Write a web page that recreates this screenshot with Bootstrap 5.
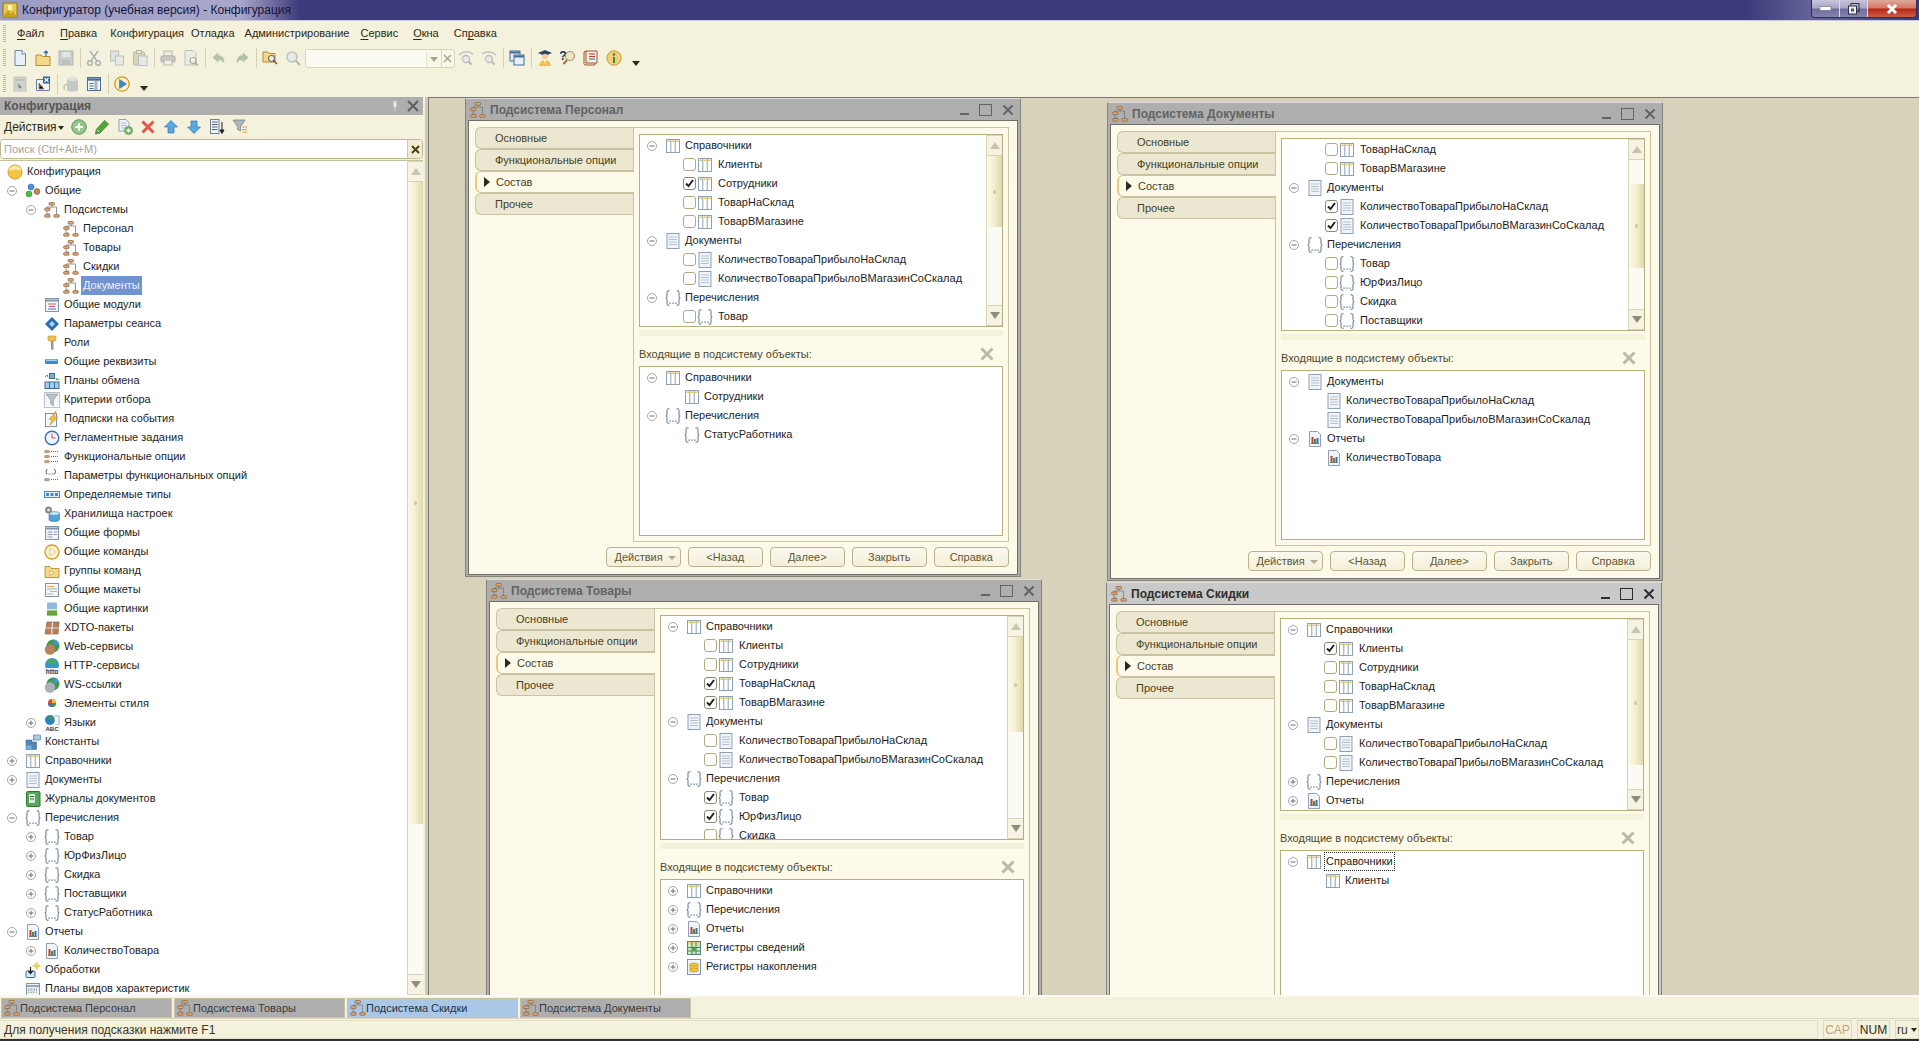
<!DOCTYPE html>
<html lang="ru">
<head>
  <meta charset="UTF-8">
  <title>Конфигуратор (учебная версия) - Конфигурация</title>
  <link href="https://cdn.jsdelivr.net/npm/bootstrap@5.3.2/dist/css/bootstrap.min.css" rel="stylesheet">
  <style>
    html, body { height: 100%; margin: 0; overflow: hidden; }
    body { font-family: "Liberation Sans", Arial, sans-serif; font-size: 11px; line-height: 1; color: #2a2a20; background: #f4f1dd; }
    .ic { width: 16px; height: 16px; flex: none; display: block; }

    .app { width: 1919px; height: 1041px; }

    /* title bar */
    .titlebar { height: 21px; flex: none; font-size: 12px; background: linear-gradient(90deg, #3c3a7a 0, #3c3a7a 91%, #66649a 94.5%, #3c3a7a 100%); border-bottom: 1px solid #c9c8dc; }
    .title-glow { height: 20px; width: 300px; padding-left: 2px; background: linear-gradient(90deg, #9c9bc2 0, #a9a8ca 80%, #3c3a7a 100%); color: #14143a; }
    .title-glow span { margin-left: 4px; }
    .winbtns { margin-right: 2px; height: 18px; border: 1px solid #2d2c52; border-top: 0; border-radius: 0 0 4px 4px; overflow: hidden; }
    .winbtn { height: 17px; display: flex; align-items: center; justify-content: center; }
    .winbtn-min, .winbtn-max { width: 28px; background: linear-gradient(180deg, #c6c5da 0, #a9a8c6 45%, #6e6d9d 55%, #8584ad 100%); border-right: 1px solid #dcdbe8; }
    .winbtn-close { width: 48px; background: linear-gradient(180deg, #dfa79a 0, #d27b68 45%, #b72a17 55%, #cc5d4a 100%); }

    /* menu and toolbars */
    .menubar { height: 25px; flex: none; padding-left: 3px; }
    .grip { width: 3px; background: repeating-linear-gradient(180deg, #bdb99c 0 1px, transparent 1px 2px); flex: none; }
    .menubar .grip { height: 17px; margin-right: 11px; }
    .menu-link { color: #2d2a12; padding: 0; }
    .menu-link u { text-underline-offset: 2px; }
    .menu-link:nth-child(2) { margin-right: 16px; }
    .menu-link:nth-child(3) { margin-right: 13px; }
    .menu-link:nth-child(4) { margin-right: 7px; }
    .menu-link:nth-child(5) { margin-right: 10px; }
    .menu-link:nth-child(6) { margin-right: 11px; }
    .menu-link:nth-child(7) { margin-right: 15px; }
    .menu-link:nth-child(8) { margin-right: 15px; }

    .toolrow { height: 24px; flex: none; padding-left: 3px; }
    .toolrow + .toolrow { height: 27px; }
    .toolrow .grip { height: 18px; margin-right: 2.5px; }
    .tb-slot { width: 23px; height: 22px; display: flex; align-items: center; justify-content: center; flex: none; }
    .tb-sep { width: 1px; height: 20px; background: #d5d1b8; margin: 0 2px; flex: none; }
    .tb-more { width: 0; height: 0; border: 4px solid transparent; border-top: 5px solid #2d2a12; border-bottom: 0; margin: 10px 0 0 6px; }
    .off { opacity: .55; }
    .tb-find { width: 150px; height: 19px; flex: none; border: 1px solid #d9d5b8; border-radius: 3px; background: #f9f7e8; }
    .tb-find .form-control { height: 17px; width: 121px; padding: 0; border: 0; border-right: 1px solid #e6e3cc; border-radius: 3px 0 0 3px; background: #fcfbf3; flex: none; }
    .tb-drop { width: 15px; border-right: 1px solid #d9d5b8; }
    .tb-drop i { width: 0; height: 0; border: 4px solid transparent; border-top: 5px solid #a9a58c; border-bottom: 0; margin-top: 2px; }

    /* left panel */
    .config-panel { width: 428px; flex: none; border-right: 3px solid #cfcbb4; padding-right: 2px; }
    .panel-head { height: 18px; flex: none; background: #aeaeae; color: #565656; font-size: 12px; font-weight: 700; padding: 0 4px; }
    .panel-acts { height: 24px; flex: none; padding-left: 4px; }
    .panel-acts .act-name { color: #2d2a12; width: 50px; font-size: 12px; }
    .act-arrow { width: 0; height: 0; border: 3px solid transparent; border-top: 4px solid #2d2a12; border-bottom: 0; margin: 2px 7px 0 4px; }
    .panel-acts .ic { margin-right: 7px; }
    .search-box { height: 20px; flex: none; border: 1px solid #bdb78d; border-radius: 4px; overflow: hidden; background: #fff; margin-bottom: 1px; }
    .search-box .form-control { border: 0; border-radius: 0; padding: 0 3px; height: 18px; font-size: 11px; line-height: 18px; background: #fff; }
    .search-box .form-control::placeholder { color: #a5a5a5; }
    .search-x { width: 15px; flex: none; background: #f1edd5; border-left: 1px solid #cfc9a4; }
    .main-tree { border-top: 1px solid #c7c29f; background: #fff; }

    /* trees */
    .tree-rows { padding-top: 1px; min-width: 0; overflow: hidden; background: #fff; }
    .tree-row { height: 19px; white-space: nowrap; color: #1d1d1d; }
    .tree-toggle { width: 10px; height: 10px; flex: none; margin-right: 8px; }
    .tree-spacer { width: 10px; flex: none; margin-right: 8px; }
    .tree-row .ic { margin-right: 4px; }
    .tree-label { padding: 0 2px; margin-left: -2px; height: 19px; line-height: 19px; }
    .tree-label-sel { background: #6f94cf; color: #edf2fb; }
    .tree-label-focus { outline: 1px dotted #222; outline-offset: -1px; }
    .tree-check.form-check-input { width: 13px; height: 13px; flex: none; margin: 0 1px 0 -1px; border: 1px solid #b1aa80; border-radius: 3px; background-color: #fff; }
    .tree-check + .ic { margin-right: 5px; }
    .tree-check.form-check-input:checked { background-color: #fff; border-color: #8a8a70; background-image: url("data:image/svg+xml,%3csvg xmlns='http://www.w3.org/2000/svg' viewBox='0 0 13 13'%3e%3cpath fill='none' stroke='%23222' stroke-width='2' d='M3 6.500l2.500 2.500 4.500-6'/%3e%3c/svg%3e"); background-size: 13px 13px; }

    /* scrollbars */
    .vscroll { width: 16px; flex: none; border-left: 1px solid #d8d4b8; background: #fbfaf3; }
    .vscroll-btn { height: 21px; flex: none; background: #f6f3e2; border-bottom: 1px solid #d8d4b8; border-top: 1px solid #d8d4b8; }
    .vscroll-up { width: 0; height: 0; border: 5px solid transparent; border-bottom: 7px solid #c8c4b0; border-top: 0; }
    .vscroll-down { width: 0; height: 0; border: 5px solid transparent; border-top: 7px solid #8f8d7d; border-bottom: 0; }
    .vscroll-thumb { background: linear-gradient(90deg, #fbf9e8 0, #f3efcf 50%, #dfd9a9 100%); flex: none; }
    .vscroll-thumb i { width: 3px; height: 4px; background: #cfc9a4; border-radius: 2px; }

    /* workspace */
    .mdi-area { position: relative; overflow: hidden; background: #d8d2bb; border-top: 1px solid #77776b; border-left: 1px solid #77776b; }
    .wnd { position: absolute; width: 556px; background: #aeaeae; border: 1px solid #84847c; border-top-color: #dcdcdc; padding: 0 2px 2px; }
    .wnd-persona { left: 36px; top: 0; }
    .wnd-docs { left: 678px; top: 4px; }
    .wnd-goods { left: 57px; top: 481px; }
    .wnd-sale { left: 677px; top: 484px; background: #c9c9c9; }
    .wnd-head { height: 21px; padding: 1px 0 0 2px; color: #636363; font-weight: 700; font-size: 12px; }
    .wnd-sale .wnd-head { color: #2e2e2e; }
    .wnd-head .ic { margin-right: 4px; }
    .wnd-ctl { margin-left: 10px; }
    .wnd-body { border: 1px solid #6f6f6a; background: #fdfaea; padding: 6px 8px 7px 6px; }
    .tab-col { width: 158px; flex: none; }
    .tab-link { height: 22px; line-height: 20px; padding: 0 0 0 19px; color: #453f1e; background: #ece7d0; border: 1px solid #c9c3a2; border-right: 0; border-radius: 6px 0 0 6px; position: relative; }
    .tab-link:hover { color: #453f1e; }
    .tab-link.active { background: #fdfaea; border-left: 2px solid #eec77f; margin-right: -1px; z-index: 1; }
    .tab-link.active::before { content: ""; position: absolute; left: 7px; top: 5px; border: 5px solid transparent; border-left: 6px solid #2a2a20; border-right: 0; }
    .wnd-panel { border: 1px solid #c9c3a2; padding: 6px 5px 5px; min-width: 0; }
    .wnd-tree { border: 1px solid #b5ae85; background: #fff; overflow: hidden; min-height: 0; }
    .split-bar { height: 6px; margin-top: 3px; flex: none; background: #f5f2dc; }
    .inc-head { height: 22px; margin: 7px 0 1px; color: #4c4727; padding-right: 8px; flex: none; }
    .wnd-foot { height: 20px; margin-top: 5px; gap: 6.5px; flex: none; }
    .wnd-btn.btn { width: 75.5px; height: 20px; padding: 0; font-size: 11px; line-height: 18px; color: #5e5836; background: linear-gradient(180deg, #fbf9ee 0, #f4f0da 100%); border: 1px solid #b9b38b; border-radius: 4px; }
    .wnd-btn i { width: 0; height: 0; border: 4px solid transparent; border-top: 4px solid #b2ac8c; border-bottom: 0; margin: 2px 4px 0 0; }

    /* bottom bars */
    .taskbar { height: 23px; flex: none; border-top: 2px solid #fbfaf2; padding: 1px 0 0 1px; gap: 2px; }
    .task-item { width: 171px; height: 20px; background: #aeaeae; border: 1px solid #c9c3a2; color: #3a3a3a; padding-left: 2px; }
    .task-item.is-on { background: #aac8e6; color: #22324a; }
    .statusbar { height: 23px; flex: none; font-size: 12px; border-top: 1px solid #dcd8c0; border-bottom: 2px solid #2e2d3e; padding-top: 1px; color: #3a3720; }
    .status-main { width: 1818px; height: 19px; padding-left: 4px; border: 1px solid #e3dfc8; border-left: 0; }
    .status-cell { height: 19px; border: 1px solid #dcd8c0; margin-left: 5px; }
    .status-cap { width: 29px; color: #b8a872; }
    .status-num { width: 33px; color: #2d2a12; }
    .status-lang { width: 24px; margin-right: -1px; }
  </style>
</head>
<body>
  <svg width="0" height="0" class="position-absolute">
    <defs>
      <symbol id="i-sub" viewBox="0 0 16 16"><path d="M8 3v2H3v1M8 5h4.500v7M3 9v3h3" fill="none" stroke="#7a7a7a" stroke-width=".8"/><g fill="#dfa877" stroke="#8a5b2e" stroke-width=".7"><rect x="5" y=".5" width="5.500" height="2.600" rx="1"/><rect x=".6" y="6" width="5.500" height="2.600" rx="1"/><rect x=".6" y="12.600" width="5.500" height="2.600" rx="1"/><rect x="9.800" y="12.600" width="5.500" height="2.600" rx="1"/></g></symbol>
      <symbol id="i-cat" viewBox="0 0 16 16"><rect x="1.500" y="1.500" width="13" height="13" fill="#fff" stroke="#8ba1b6"/><path d="M2.500 2.500h2.500v1.500H2.500zM6.700 2.500h2.600v1.500H6.700zM11 2.500h2.500v1.500H11z" fill="#f4c63c"/><path d="M5.800 2v12M10.200 2v12" stroke="#8ba1b6"/></symbol>
      <symbol id="i-doc" viewBox="0 0 16 16"><rect x="2" y=".5" width="12" height="15" fill="#f0f4f8" stroke="#8ca1b6"/><path d="M4 4h8M4 6.500h8M4 9h8M4 11.500h8" stroke="#b4c3d1"/></symbol>
      <symbol id="i-enum" viewBox="0 0 16 16"><path d="M4.500 .8H3Q2 .8 2 2.300V6.500Q2 8 .8 8 2 8 2 9.500V13.700Q2 15.200 3 15.200H4.500M11.500 .8H13Q14 .8 14 2.300V6.500Q14 8 15.200 8 14 8 14 9.500V13.700Q14 15.200 13 15.200H11.500" fill="none" stroke="#4a6480" stroke-width=".9"/><path d="M4.500 12.500h1.200v1.200H4.500zM7.400 12.500h1.200v1.200H7.400zM10.300 12.500h1.200v1.200H10.300z" fill="#4a6480"/></symbol>
      <symbol id="i-rep" viewBox="0 0 16 16"><path d="M2.500.5h8l3 3v12h-11z" fill="#f0f4f8" stroke="#8ca1b6"/><rect x="4.500" y="6" width="2" height="6" fill="#d23a2a"/><rect x="7" y="8" width="2" height="4" fill="#3a9a3a"/><rect x="9.500" y="7" width="2" height="5" fill="#3a6ac8"/><path d="M4 12.500h8" stroke="#777"/></symbol>
      <symbol id="i-common" viewBox="0 0 16 16"><circle cx="6" cy="4" r="3" fill="#4a90d8" stroke="#2b5f9a" stroke-width=".5"/><circle cx="4" cy="11" r="3" fill="#52b948" stroke="#2d7a28" stroke-width=".5"/><circle cx="12" cy="8.500" r="3" fill="#b98862" stroke="#7b5534" stroke-width=".5"/></symbol>
      <symbol id="i-root" viewBox="0 0 16 16"><circle cx="8" cy="8" r="7" fill="#f5c445" stroke="#c89a2e"/><path d="M1.500 7Q8 4 14.500 7 14 2 8 1.500 2 2 1.500 7" fill="#fbe9a8"/></symbol>
      <symbol id="i-mod" viewBox="0 0 16 16"><rect x="1.500" y="1.500" width="13" height="13" fill="#f4f6f9" stroke="#7d95ad"/><path d="M2 3.500h12" stroke="#7d95ad" stroke-width="2"/><path d="M4 7h8M5 9.500h6" stroke="#d65a4a"/><path d="M4 12h8" stroke="#4a78c8"/></symbol>
      <symbol id="i-param" viewBox="0 0 16 16"><path d="M8 1l7 7-7 7-7-7z" fill="#2c6cb4"/><path d="M8 5l3 3-3 3-3-3z" fill="#a8d0f0"/></symbol>
      <symbol id="i-role" viewBox="0 0 16 16"><rect x="4" y="1" width="8" height="5" rx="1" fill="#eec14e" stroke="#b88e2a" stroke-width=".6"/><path d="M7 6h2.500v8L8 15.500 7 14z" fill="#9a9a90"/></symbol>
      <symbol id="i-attr" viewBox="0 0 16 16"><rect x="1" y="5" width="13" height="5" rx="1" fill="#3a8cd4"/><rect x="2" y="5.500" width="11" height="1.500" fill="#a4d0f2"/></symbol>
      <symbol id="i-exch" viewBox="0 0 16 16"><rect x="5.500" y=".5" width="5" height="5" fill="#7ab0dc" stroke="#3f6c94"/><rect x="1" y="9" width="14" height="6.500" fill="#a8cce8" stroke="#3f6c94"/><path d="M5.500 9v6.500M10.500 9v6.500" stroke="#3f6c94"/><path d="M1 4l2-2 1 2M15 6l-2 1-1-2" fill="none" stroke="#3a9a3a"/></symbol>
      <symbol id="i-filter" viewBox="0 0 16 16"><rect x=".5" y=".5" width="15" height="15" fill="#f6f8fa" stroke="#b8c4cf"/><path d="M2 2h12L9.500 8v6l-3-2V8z" fill="#b9c0c5" stroke="#7f8a92" stroke-width=".5"/></symbol>
      <symbol id="i-bolt" viewBox="0 0 16 16"><rect x="1.500" y="2.500" width="11" height="13" fill="#f6f8fa" stroke="#7d95ad"/><path d="M12 0L5 8.500h3L6 14l8-8h-4z" fill="#f2c23a" stroke="#c47a1c" stroke-width=".5"/></symbol>
      <symbol id="i-clock" viewBox="0 0 16 16"><circle cx="8" cy="8" r="6.800" fill="#eef4fb" stroke="#3c6fb4" stroke-width="1.400"/><path d="M8 3.500V8h3.500" fill="none" stroke="#d24b3a"/></symbol>
      <symbol id="i-fopt" viewBox="0 0 16 16"><g fill="#c9a583" stroke="#8a6a4a" stroke-width=".5"><rect x=".5" y="1.500" width="5" height="2.200" rx="1"/><rect x=".5" y="6.500" width="5" height="2.200" rx="1"/><rect x=".5" y="11.500" width="5" height="2.200" rx="1"/></g><path d="M7 2.500h8M7 7.500h8M7 12.500h8" stroke="#666" stroke-dasharray="1 1"/></symbol>
      <symbol id="i-fpar" viewBox="0 0 16 16"><path d="M3 1Q1 3.500 3 6.500M10.500 1Q12.500 3.500 10.500 6.500" fill="none" stroke="#555"/><path d="M4.500 5.500h1v1h-1zM6.500 5.500h1v1h-1zM8.500 5.500h1v1h-1z" fill="#555"/><rect x=".5" y="10.500" width="5" height="2.200" rx="1" fill="#c9a583" stroke="#8a6a4a" stroke-width=".5"/><path d="M7 11.500h8" stroke="#666" stroke-dasharray="1 1"/></symbol>
      <symbol id="i-types" viewBox="0 0 16 16"><rect x=".5" y="4.500" width="15" height="6" fill="#e4eef7" stroke="#4a88c0"/><path d="M2 6h3v3H2zM6.500 6h3v3h-3zM11 6h3v3h-3z" fill="#4a88c0"/></symbol>
      <symbol id="i-store" viewBox="0 0 16 16"><path d="M5 7.500h10.500v6Q15.500 15.500 10 15.500 5 15.500 5 13.500z" fill="#4fa3dc" stroke="#2a6c9a" stroke-width=".5"/><ellipse cx="10.200" cy="7.500" rx="5.300" ry="2" fill="#c6e3f6" stroke="#2a6c9a" stroke-width=".5"/><circle cx="4.500" cy="4" r="3.500" fill="#8b8b8b"/><circle cx="4.500" cy="4" r="1.300" fill="#eee"/></symbol>
      <symbol id="i-form" viewBox="0 0 16 16"><rect x="1.500" y="1.500" width="13" height="13" fill="#f4f6f9" stroke="#7d95ad"/><path d="M2 3.500h12" stroke="#7d95ad" stroke-width="2"/><path d="M3.500 7h5M3.500 9.500h5M3.500 12h5M10 7h3M10 9.500h3" stroke="#8a9aab"/></symbol>
      <symbol id="i-cmd" viewBox="0 0 16 16"><circle cx="8" cy="8" r="7" fill="#fdf3cf" stroke="#d2a12e" stroke-width="1.400"/><path d="M6 4.500L11.500 8 6 11.500z" fill="#fff" stroke="#c7a24a" stroke-width=".6"/></symbol>
      <symbol id="i-cmdgrp" viewBox="0 0 16 16"><path d="M1 3.500h5l1.500 2H15v9H1z" fill="#f4d984" stroke="#bf9a3c"/><path d="M6 7.500L10 10l-4 2.500z" fill="#fff" stroke="#bf9a3c" stroke-width=".6"/></symbol>
      <symbol id="i-layout" viewBox="0 0 16 16"><rect x="1.500" y="1.500" width="13" height="13" fill="#f4f6f9" stroke="#7d95ad"/><path d="M3 4.500h7" stroke="#e2a45a"/><path d="M3 7h10" stroke="#9ab4cc"/><path d="M6 9.500h7" stroke="#d8a88a"/><path d="M3 12h6" stroke="#9ab4cc"/></symbol>
      <symbol id="i-pic" viewBox="0 0 16 16"><rect x="3" y="1.500" width="10" height="13" rx="1" fill="#8fb8dc"/><rect x="3" y="9" width="10" height="5.500" fill="#62a33e"/><rect x="3" y="8" width="10" height="1.500" fill="#e9edc9"/></symbol>
      <symbol id="i-xdto" viewBox="0 0 16 16"><path d="M3 2h12l-1 12H1z" fill="#b87f55" stroke="#7e5232" stroke-width=".6"/><path d="M1.800 8h12.800M8.500 2l-.8 12" stroke="#d9e6f2" stroke-width="1.200"/></symbol>
      <symbol id="i-web" viewBox="0 0 16 16"><circle cx="9" cy="7" r="6.500" fill="#3f9a52"/><path d="M9 .5a6.500 6.500 0 0 1 6 4l-5 2z" fill="#4a90d8"/><circle cx="6" cy="10.500" r="5.200" fill="#b9825a"/></symbol>
      <symbol id="i-ws" viewBox="0 0 16 16"><circle cx="9" cy="7" r="6.500" fill="#3f9a52"/><path d="M9 .5a6.500 6.500 0 0 1 6 4l-5 2z" fill="#4a90d8"/><circle cx="6" cy="10.500" r="5.200" fill="#a9b0b8"/></symbol>
      <symbol id="i-http" viewBox="0 0 16 16"><circle cx="8" cy="7" r="7" fill="#3f8fd8"/><path d="M3 3q5-4 10 0l-2 4-6-1z" fill="#4aa85a"/><rect x="0" y="10" width="16" height="6" fill="#eef4fb"/><text x="8" y="15.500" font-size="6.500" font-weight="700" text-anchor="middle" fill="#23425f" font-family="Liberation Sans">http</text></symbol>
      <symbol id="i-style" viewBox="0 0 16 16"><circle cx="8" cy="7" r="4" fill="#d64a3a"/><path d="M8 3a4 4 0 0 1 4 4H8z" fill="#e8c23a"/><path d="M4 7a4 4 0 0 0 4 4V7z" fill="#4a6ac8"/><path d="M12 7a4 4 0 0 1-4 4V7z" fill="#3a9a4a"/></symbol>
      <symbol id="i-lang" viewBox="0 0 16 16"><circle cx="6" cy="5" r="5" fill="#2f7fc8"/><path d="M3 2q3-2 6 1l-3 3z" fill="#3f9a52"/><path d="M10.500 1H15v9h-4" fill="#fff" stroke="#9aa7b4"/><rect x="0" y="10" width="16" height="6" fill="#f4f6f9"/><text x="8" y="15.500" font-size="6" font-weight="700" text-anchor="middle" fill="#23425f" font-family="Liberation Sans">ABC</text></symbol>
      <symbol id="i-const" viewBox="0 0 16 16"><rect x="1" y="6" width="6" height="4.500" fill="#4a88c0" stroke="#2a5f90" stroke-width=".5"/><rect x="1" y="11" width="6" height="4.500" fill="#7ab0dc" stroke="#2a5f90" stroke-width=".5"/><rect x="7.500" y="8" width="4" height="7.500" fill="#4a88c0" stroke="#2a5f90" stroke-width=".5"/><rect x="8.500" y="1" width="7" height="5" fill="#a8cce8" stroke="#2a5f90" stroke-width=".5"/></symbol>
      <symbol id="i-journal" viewBox="0 0 16 16"><rect x="1.500" y=".5" width="13.500" height="15" rx="1" fill="#58a65a" stroke="#2f7a35"/><rect x="4" y="3" width="6" height="9" fill="#d7ecd5"/><path d="M5 5.500h4M5 8h4" stroke="#2f7a35"/></symbol>
      <symbol id="i-proc" viewBox="0 0 16 16"><path d="M11.500 0l1.200 2.800 2.800 1-2.800 1.200-1.200 2.800-1-2.800-3-1.200 3-1z" fill="#f6d84a" stroke="#c9a52a" stroke-width=".4"/><rect x="1" y="9" width="9" height="6.500" rx="1" fill="#d6e6f4" stroke="#3c6fa0"/><path d="M5.500 5v6M3.300 9l2.200 2.500L7.700 9" fill="none" stroke="#222" stroke-width="1.200"/></symbol>
      <symbol id="i-pvh" viewBox="0 0 16 16"><rect x="1.500" y="2.500" width="13" height="12" fill="#f0f2f5" stroke="#7d95ad"/><path d="M2 5h12" stroke="#7d95ad" stroke-width="1.600"/><path d="M4 7v6M6.500 7v6M9 7v6M11.500 7v6M3 8.500h10M3 11h10" stroke="#9aa7b4" stroke-dasharray="1 1"/></symbol>
      <symbol id="i-regsv" viewBox="0 0 16 16"><rect x="1.500" y="1.500" width="13" height="13" fill="#cfe6c6" stroke="#5a7d8e"/><rect x="2" y="2" width="12" height="2.500" fill="#e8d97a"/><path d="M6 2v12M10 2v12M2 7.500h12M2 11h12" stroke="#4a8a4a"/><rect x="6.500" y="8" width="3" height="2.500" fill="#3a9a3a"/></symbol>
      <symbol id="i-regnak" viewBox="0 0 16 16"><rect x="1.500" y=".5" width="13" height="15" fill="#eef3f8" stroke="#7d95ad"/><ellipse cx="8" cy="6" rx="4.500" ry="2" fill="#f2c63a" stroke="#b88e1e" stroke-width=".6"/><ellipse cx="8" cy="8.500" rx="4.500" ry="2" fill="#f2c63a" stroke="#b88e1e" stroke-width=".6"/><ellipse cx="8" cy="11" rx="4.500" ry="2" fill="#f2c63a" stroke="#b88e1e" stroke-width=".6"/></symbol>

      <symbol id="t-new" viewBox="0 0 16 16"><path d="M3 .5h7l3.500 3.500v11.500H3z" fill="#e6f0fa" stroke="#6a88a8"/><path d="M10 .5V4h3.500" fill="#fff" stroke="#6a88a8"/></symbol>
      <symbol id="t-open" viewBox="0 0 16 16"><path d="M1 5h5l1.500 1.500H15v9H1z" fill="#f5d98a" stroke="#b08d3a"/><path d="M11 6V1M9 3l2-2 2 2" fill="none" stroke="#2a6cb4" stroke-width="1.200"/></symbol>
      <symbol id="t-save" viewBox="0 0 16 16"><rect x="1" y="1" width="14" height="14" fill="#a9b5c0" stroke="#7c8a96"/><rect x="4" y="2" width="8" height="5" fill="#d8dfe5"/><rect x="4" y="10" width="8" height="5" fill="#8c99a4"/></symbol>
      <symbol id="t-cut" viewBox="0 0 16 16"><path d="M4 1l7 10M12 1L5 11" stroke="#6c7f92" stroke-width="1.400"/><circle cx="4" cy="13" r="2.300" fill="none" stroke="#6c7f92" stroke-width="1.400"/><circle cx="12" cy="13" r="2.300" fill="none" stroke="#6c7f92" stroke-width="1.400"/></symbol>
      <symbol id="t-copy" viewBox="0 0 16 16"><rect x="1.500" y="1" width="8" height="10" fill="#cdd7e0" stroke="#8b9bab"/><rect x="6.500" y="6" width="8" height="9" fill="#dde4ea" stroke="#8b9bab"/></symbol>
      <symbol id="t-paste" viewBox="0 0 16 16"><rect x="1.500" y="2" width="11" height="13" rx="1" fill="#c8b99a" stroke="#8b8a7a"/><rect x="4.500" y=".5" width="5" height="3" fill="#dde" stroke="#8b8a7a"/><rect x="6.500" y="6" width="8.500" height="9.500" fill="#dde4ea" stroke="#8b9bab"/></symbol>
      <symbol id="t-print" viewBox="0 0 16 16"><rect x="4" y="1" width="8" height="5" fill="#e8ebee" stroke="#8b8b8b"/><rect x="1" y="6" width="14" height="6" rx="1" fill="#a8aaad" stroke="#7a7a7a"/><rect x="4" y="10" width="8" height="5" fill="#eee" stroke="#8b8b8b"/></symbol>
      <symbol id="t-prev" viewBox="0 0 16 16"><path d="M2 .5h8l3 3V15H2z" fill="#e3e8ed" stroke="#8b9bab"/><circle cx="10" cy="10.500" r="3" fill="#fff" stroke="#7a6a50" stroke-width="1.200"/><path d="M12 12.500l3 3" stroke="#7a6a50" stroke-width="1.500"/></symbol>
      <symbol id="t-undo" viewBox="0 0 16 16"><path d="M7 3L2 7.500 7 12V9.500q4 0 6 3 0-7-6-7z" fill="#79a07f" stroke="#5b8262" stroke-width=".5"/></symbol>
      <symbol id="t-redo" viewBox="0 0 16 16"><path d="M9 3l5 4.500L9 12V9.500q-4 0-6 3 0-7 6-7z" fill="#79a07f" stroke="#5b8262" stroke-width=".5"/></symbol>
      <symbol id="t-find" viewBox="0 0 16 16"><path d="M1 2h5l1.500 1.500H13V12H1z" fill="#f5d98a" stroke="#b08d3a"/><circle cx="9.500" cy="8.500" r="3" fill="#eaf2fa" stroke="#7a6a50" stroke-width="1.200"/><path d="M11.500 10.500l3.500 3.500" stroke="#7a5a30" stroke-width="1.600"/></symbol>
      <symbol id="t-search" viewBox="0 0 16 16"><circle cx="7" cy="7" r="5" fill="#dfe6ec" stroke="#8b9bab" stroke-width="1.500"/><path d="M10.500 10.500l4.500 4.500" stroke="#8a8878" stroke-width="2"/></symbol>
      <symbol id="t-next" viewBox="0 0 16 16"><circle cx="8" cy="9" r="3.500" fill="#dfe6ec" stroke="#8b9bab" stroke-width="1.300"/><path d="M10.500 11.500l3 3" stroke="#8a8878" stroke-width="1.800"/><path d="M1 5Q8-1 15 4" fill="none" stroke="#8fa4b5" stroke-width="1.600"/></symbol>
      <symbol id="t-prv" viewBox="0 0 16 16"><circle cx="8" cy="9" r="3.500" fill="#dfe6ec" stroke="#8b9bab" stroke-width="1.300"/><path d="M10.500 11.500l3 3" stroke="#8a8878" stroke-width="1.800"/><path d="M15 5Q8-1 1 4" fill="none" stroke="#8fa4b5" stroke-width="1.600"/></symbol>
      <symbol id="t-wins" viewBox="0 0 16 16"><rect x="1" y="1" width="10" height="10" fill="#e8eef4" stroke="#456f96"/><path d="M1 2.500h10" stroke="#456f96" stroke-width="2"/><rect x="5" y="5" width="10" height="10" fill="#e8eef4" stroke="#456f96"/><path d="M5 6.500h10" stroke="#456f96" stroke-width="2"/></symbol>
      <symbol id="t-hat" viewBox="0 0 16 16"><path d="M8 0L1 3l7 3 7-3z" fill="#24466a"/><circle cx="8" cy="6.500" r="2.800" fill="#f3c89a"/><path d="M2 16q1-6 6-6t6 6z" fill="#edc24a"/><path d="M7 10l1 4 1-4z" fill="#fff"/></symbol>
      <symbol id="t-help" viewBox="0 0 16 16"><text x="3" y="10" font-size="13" font-weight="700" text-anchor="middle" fill="#223a66" font-family="Liberation Sans">?</text><circle cx="10" cy="6" r="4.500" fill="#f6e8b8" stroke="#8a8a8a"/><path d="M7 10l-3.500 4" stroke="#a9742a" stroke-width="2"/></symbol>
      <symbol id="t-book" viewBox="0 0 16 16"><path d="M3 1h11v12H3z" fill="#f4efe2" stroke="#a0522d"/><path d="M3 1q-2 0-2 2v11q0 1 2 1h9v-2" fill="none" stroke="#a0522d"/><path d="M6 4h6M6 6.500h6" stroke="#c0392b"/><path d="M6 9h6" stroke="#2a5fa8"/></symbol>
      <symbol id="t-info" viewBox="0 0 16 16"><circle cx="8" cy="8" r="7.200" fill="#f3cf7a" stroke="#c79a3a"/><circle cx="8" cy="4.500" r="1.300" fill="#3e8a3c"/><rect x="7" y="7" width="2" height="6" fill="#3e8a3c"/></symbol>
      <symbol id="t-tree" viewBox="0 0 16 16"><rect x="2" y="1" width="12" height="14" fill="#b4bcc3" stroke="#98a2ab"/><path d="M3 4h10" stroke="#8c97a1" stroke-width="2"/><path d="M6 7v5h4M6 9h3" stroke="#8c97a1"/></symbol>
      <symbol id="t-treex" viewBox="0 0 16 16"><path d="M1.500 3.500h7v-2h6v13h-13z" fill="#f2f5f8" stroke="#6c8298"/><rect x="8" y=".5" width="7" height="7" fill="#2a5f9a"/><path d="M9.500 2l4 4M13.500 2l-4 4" stroke="#fff" stroke-width="1.300"/><path d="M4 7v6h5M4 10h4" stroke="#9a8a6a"/></symbol>
      <symbol id="t-db" viewBox="0 0 16 16"><path d="M4 3v10.500Q4 15.500 9.500 15.500T15 13.500V3z" fill="#9aa7b2"/><ellipse cx="9.500" cy="3" rx="5.500" ry="2.200" fill="#ccd4da"/><path d="M4 8Q0 9 1.500 14" fill="none" stroke="#7fa27e" stroke-width="1.400"/></symbol>
      <symbol id="t-tbl" viewBox="0 0 16 16"><rect x="1.500" y="1.500" width="13" height="13" fill="#f4f6f9" stroke="#456f96"/><path d="M2 3.500h12" stroke="#456f96" stroke-width="2.400"/><path d="M10 5v9" stroke="#a8b4bf" stroke-width="3"/><path d="M3.500 7.500h4M3.500 10h4M3.500 12.500h4" stroke="#55677a"/></symbol>
      <symbol id="t-play" viewBox="0 0 16 16"><circle cx="8" cy="8" r="7.200" fill="#fdf1c2" stroke="#d09c22" stroke-width="1.300"/><path d="M5.500 3.500L12.500 8l-7 4.500z" fill="#3a88d8" stroke="#23619f" stroke-width=".5"/></symbol>
      <symbol id="a-add" viewBox="0 0 16 16"><circle cx="8" cy="8" r="7.300" fill="#8fc98a" stroke="#6b8f68"/><path d="M8 4v8M4 8h8" stroke="#fff" stroke-width="2"/></symbol>
      <symbol id="a-edit" viewBox="0 0 16 16"><path d="M10.500 1.500l4 3.500L6 14l-4.500 1 .8-4.500z" fill="#52a83a" stroke="#2d6a1f" stroke-width=".7"/><path d="M3 11l2 2" stroke="#e8f2c0"/></symbol>
      <symbol id="a-adddoc" viewBox="0 0 16 16"><path d="M2 .5h7l3 3V12H2z" fill="#eef3f8" stroke="#8ca1b6"/><path d="M4 4h5M4 6.500h6M4 9h4" stroke="#aabbcb"/><circle cx="11.500" cy="11.500" r="4" fill="#74b96c" stroke="#4c8a48" stroke-width=".6"/><path d="M11.500 9.500v4M9.500 11.500h4" stroke="#fff" stroke-width="1.300"/></symbol>
      <symbol id="a-del" viewBox="0 0 16 16"><path d="M2.500 2.500l11 11M13.500 2.500l-11 11" stroke="#df5a4a" stroke-width="3"/></symbol>
      <symbol id="a-gray" viewBox="0 0 16 16"><path d="M2.500 2.500l11 11M13.500 2.500l-11 11" stroke="#bdb8ac" stroke-width="3"/></symbol>
      <symbol id="a-up" viewBox="0 0 16 16"><path d="M8 1.500L14.500 8H11v6H5V8H1.500z" fill="#59a8e6" stroke="#3474a8" stroke-width=".7"/></symbol>
      <symbol id="a-down" viewBox="0 0 16 16"><path d="M8 14.500L14.500 8H11V2H5v6H1.500z" fill="#59a8e6" stroke="#3474a8" stroke-width=".7"/></symbol>
      <symbol id="a-list" viewBox="0 0 16 16"><rect x="1.500" y=".5" width="8.500" height="14" fill="#eef3f8" stroke="#6c8298"/><path d="M3 3h5.500M3 5.500h5.500M3 8h5.500M3 10.500h5.500" stroke="#55677a"/><path d="M13 3v10M11 11l2 3.500 2-3.500z" fill="#222" stroke="#222"/></symbol>
      <symbol id="a-filter" viewBox="0 0 16 16"><path d="M1 1h12L8.500 7.500V12l-3-1.500v-3z" fill="#aeb6bb" stroke="#6e787e" stroke-width=".7"/><path d="M10 8h5M10 10.500h5M10 13h5" stroke="#e0a040"/></symbol>
      <symbol id="i-minus" viewBox="0 0 10 10"><circle cx="5" cy="5" r="4.500" fill="#fff" stroke="#a5a5a5"/><path d="M2.500 5h5" stroke="#6e6e6e"/></symbol>
      <symbol id="i-plus" viewBox="0 0 10 10"><circle cx="5" cy="5" r="4.500" fill="#fff" stroke="#a5a5a5"/><path d="M2.500 5h5M5 2.500v5" stroke="#6e6e6e"/></symbol>
    </defs>
  </svg>

  <div class="app d-flex flex-column">
    <header class="titlebar d-flex align-items-start">
      <div class="title-glow d-flex align-items-center">
        <svg class="ic" viewBox="0 0 16 16"><rect x="1" y="1" width="14" height="14" fill="#e8c84a" stroke="#8a7a20"/><path d="M1 15l5-7 3 4 2-3 4 6z" fill="#c9a21c"/><rect x="6" y="3" width="4" height="5" fill="#fff5c0"/></svg>
        <span>Конфигуратор (учебная версия) - Конфигурация</span>
      </div>
      <div class="winbtns d-flex ms-auto">
        <div class="winbtn winbtn-min"><svg width="12" height="5"><rect width="11" height="4" y=".5" fill="#fff" stroke="#556" stroke-width=".5"/></svg></div>
        <div class="winbtn winbtn-max"><svg width="12" height="12"><rect x="3" y=".5" width="8" height="8" fill="none" stroke="#334"/><rect x=".5" y="3" width="8" height="8" fill="#eee" stroke="#334"/><rect x="3" y="5.500" width="3" height="3" fill="#556"/></svg></div>
        <div class="winbtn winbtn-close"><svg width="12" height="10"><path d="M2 1l8 8M10 1L2 9" stroke="#fff" stroke-width="3"/></svg></div>
      </div>
    </header>

    <nav class="menubar nav d-flex align-items-center flex-nowrap">
      <div class="grip"></div>
      <a class="menu-link nav-link" href="#"><u>Ф</u>айл</a>
      <a class="menu-link nav-link" href="#"><u>П</u>равка</a>
      <a class="menu-link nav-link" href="#">Конфигурация</a>
      <a class="menu-link nav-link" href="#">Отладка</a>
      <a class="menu-link nav-link" href="#">Администрирование</a>
      <a class="menu-link nav-link" href="#"><u>С</u>ервис</a>
      <a class="menu-link nav-link" href="#"><u>О</u>кна</a>
      <a class="menu-link nav-link" href="#">Сп<u>р</u>авка</a>
    </nav>
    <div class="toolrow d-flex align-items-center" id="toolsTop"></div>
    <div class="toolrow d-flex align-items-center" id="toolsBottom"></div>

    <main class="d-flex flex-grow-1" style="min-height:0">
      <aside class="config-panel d-flex flex-column">
        <div class="panel-head d-flex align-items-center">
          <span>Конфигурация</span>
          <svg class="ms-auto" width="8" height="12" viewBox="0 0 8 12"><rect x="2.500" y="1" width="3" height="6" rx="1" fill="#e8e8e8"/><path d="M4 7v4" stroke="#ddd"/></svg>
          <svg class="ms-2" width="12" height="12" viewBox="0 0 12 12"><path d="M1 1l10 10M11 1L1 11" stroke="#5e5e5e" stroke-width="2"/></svg>
        </div>
        <div class="panel-acts d-flex align-items-center" id="panelActs"></div>
        <div class="search-box d-flex">
          <input class="form-control" type="text" placeholder="Поиск (Ctrl+Alt+M)">
          <div class="search-x d-flex align-items-center justify-content-center"><svg width="9" height="9"><path d="M1 1l7 7M8 1L1 8" stroke="#4a3f10" stroke-width="2"/></svg></div>
        </div>
        <div class="main-tree d-flex flex-grow-1" style="min-height:0">
          <div class="tree-rows flex-grow-1" id="mainTree"></div>
          <div class="vscroll d-flex flex-column" id="mainScroll"></div>
        </div>
      </aside>
      <section class="mdi-area flex-grow-1" id="mdi"></section>
    </main>

    <footer class="taskbar d-flex" id="taskbar"></footer>
    <div class="statusbar d-flex">
      <div class="status-main d-flex align-items-center">Для получения подсказки нажмите F1</div>
      <div class="status-cell status-cap d-flex align-items-center justify-content-center">CAP</div>
      <div class="status-cell status-num d-flex align-items-center justify-content-center">NUM</div>
      <div class="status-cell status-lang d-flex align-items-center justify-content-center">ru&nbsp;<span class="act-arrow m-0"></span></div>
    </div>
  </div>

  <script src="https://cdn.jsdelivr.net/npm/bootstrap@5.3.2/dist/js/bootstrap.bundle.min.js"></script>
  <script>
    function ic(name, cls) {
      return '<svg class="ic ' + (cls || '') + '"><use href="#' + name + '"></use></svg>';
    }

    // '|' = separator, '!' prefix = greyed out
    function toolbar(id, items) {
      let html = '<div class="grip"></div>';
      items.forEach(function (it) {
        if (it === '|') html += '<div class="tb-sep"></div>';
        else if (it === 'find') html += '<div class="tb-find d-flex"><input class="form-control" type="text"><div class="tb-drop d-flex align-items-center justify-content-center"><i></i></div><div class="flex-grow-1 d-flex align-items-center justify-content-center"><svg width="9" height="9"><path d="M1 1l7 7M8 1L1 8" stroke="#a9a58c" stroke-width="1.500"/></svg></div></div>';
        else if (it === 'more') html += '<div class="tb-more"></div>';
        else if (it[0] === '!') html += '<div class="tb-slot">' + ic(it.slice(1), 'off') + '</div>';
        else html += '<div class="tb-slot">' + ic(it) + '</div>';
      });
      document.getElementById(id).innerHTML = html;
    }
    toolbar('toolsTop', ['t-new', 't-open', '!t-save', '|', '!t-cut', '!t-copy', '!t-paste', '|', '!t-print', '!t-prev', '|', '!t-undo', '!t-redo', '|', 't-find', '!t-search', 'find', '!t-next', '!t-prv', '|', 't-wins', '|', 't-hat', 't-help', 't-book', 't-info', 'more']);
    toolbar('toolsBottom', ['!t-tree', 't-treex', '|', '!t-db', 't-tbl', '|', 't-play', 'more']);

    document.getElementById('panelActs').innerHTML = '<span class="act-name">Действия</span><span class="act-arrow"></span>'
      + ['a-add', 'a-edit', 'a-adddoc', 'a-del', 'a-up', 'a-down', 'a-list', 'a-filter'].map(function (n) { return ic(n); }).join('');

    // row: [level, toggle, icon, text, flag]; flag: 0/1 = checkbox, 'sel', 'focus'
    function treeRow(r) {
      const level = r[0], toggle = r[1], icon = r[2], text = r[3], flag = r[4];
      const pad = level === 0 ? 7 : (level - 1) * 19 + 7;
      let html = '<div class="tree-row d-flex align-items-center" style="padding-left:' + pad + 'px">';
      if (toggle) html += '<svg class="tree-toggle"><use href="#i-' + (toggle === '-' ? 'minus' : 'plus') + '"></use></svg>';
      else if (level > 0) html += '<span class="tree-spacer"></span>';
      if (flag === 0 || flag === 1) html += '<input class="tree-check form-check-input" type="checkbox"' + (flag ? ' checked' : '') + '>';
      html += ic('i-' + icon);
      let cls = 'tree-label';
      if (flag === 'sel') cls += ' tree-label-sel';
      if (flag === 'focus') cls += ' tree-label-focus';
      return html + (text ? '<span class="' + cls + '">' + text + '</span>' : '') + '</div>';
    }

    // parts: [track, thumb], in pixels
    function scrollBar(parts) {
      return '<div class="vscroll-btn d-flex align-items-center justify-content-center"><i class="vscroll-up"></i></div>'
        + '<div class="flex-shrink-0" style="height:' + parts[0] + 'px"></div>'
        + '<div class="vscroll-thumb d-flex align-items-center justify-content-center" style="height:' + parts[1] + 'px"><i></i></div>'
        + '<div class="flex-grow-1"></div>'
        + '<div class="vscroll-btn d-flex align-items-center justify-content-center"><i class="vscroll-down"></i></div>';
    }

    const mainRows = [
      [0, '', 'root', 'Конфигурация'], [1, '-', 'common', 'Общие'], [2, '-', 'sub', 'Подсистемы'],
      [3, '', 'sub', 'Персонал'], [3, '', 'sub', 'Товары'], [3, '', 'sub', 'Скидки'], [3, '', 'sub', 'Документы', 'sel'],
      [2, '', 'mod', 'Общие модули'], [2, '', 'param', 'Параметры сеанса'], [2, '', 'role', 'Роли'],
      [2, '', 'attr', 'Общие реквизиты'], [2, '', 'exch', 'Планы обмена'], [2, '', 'filter', 'Критерии отбора'],
      [2, '', 'bolt', 'Подписки на события'], [2, '', 'clock', 'Регламентные задания'], [2, '', 'fopt', 'Функциональные опции'],
      [2, '', 'fpar', 'Параметры функциональных опций'], [2, '', 'types', 'Определяемые типы'], [2, '', 'store', 'Хранилища настроек'],
      [2, '', 'form', 'Общие формы'], [2, '', 'cmd', 'Общие команды'], [2, '', 'cmdgrp', 'Группы команд'],
      [2, '', 'layout', 'Общие макеты'], [2, '', 'pic', 'Общие картинки'], [2, '', 'xdto', 'XDTO-пакеты'],
      [2, '', 'web', 'Web-сервисы'], [2, '', 'http', 'HTTP-сервисы'], [2, '', 'ws', 'WS-ссылки'],
      [2, '', 'style', 'Элементы стиля'], [2, '+', 'lang', 'Языки'], [1, '', 'const', 'Константы'],
      [1, '+', 'cat', 'Справочники'], [1, '+', 'doc', 'Документы'], [1, '', 'journal', 'Журналы документов'],
      [1, '-', 'enum', 'Перечисления'], [2, '+', 'enum', 'Товар'], [2, '+', 'enum', 'ЮрФизЛицо'], [2, '+', 'enum', 'Скидка'],
      [2, '+', 'enum', 'Поставщики'], [2, '+', 'enum', 'СтатусРаботника'], [1, '-', 'rep', 'Отчеты'],
      [2, '+', 'rep', 'КоличествоТовара'], [1, '', 'proc', 'Обработки'], [1, '', 'pvh', 'Планы видов характеристик']
    ];
    document.getElementById('mainTree').innerHTML = mainRows.map(treeRow).join('');
    document.getElementById('mainScroll').innerHTML = scrollBar([0, 642]);

    const DOC_A = 'КоличествоТовараПрибылоНаСклад', DOC_B = 'КоличествоТовараПрибылоВМагазинСоСкалад';
    const windows = [
      { cls: 'wnd-persona', title: 'Подсистема Персонал', upperH: 193, height: 479, foot: true, scroll: [0, 71],
        upper: [[1, '-', 'cat', 'Справочники'], [2, '', 'cat', 'Клиенты', 0], [2, '', 'cat', 'Сотрудники', 1], [2, '', 'cat', 'ТоварНаСклад', 0], [2, '', 'cat', 'ТоварВМагазине', 0], [1, '-', 'doc', 'Документы'], [2, '', 'doc', DOC_A, 0], [2, '', 'doc', DOC_B, 0], [1, '-', 'enum', 'Перечисления'], [2, '', 'enum', 'Товар', 0], [2, '', 'enum', '', 0]],
        lower: [[1, '-', 'cat', 'Справочники'], [2, '', 'cat', 'Сотрудники'], [1, '-', 'enum', 'Перечисления'], [2, '', 'enum', 'СтатусРаботника']] },
      { cls: 'wnd-docs', title: 'Подсистема Документы', upperH: 193, height: 479, foot: true, scroll: [24, 84],
        upper: [[2, '', 'cat', 'ТоварНаСклад', 0], [2, '', 'cat', 'ТоварВМагазине', 0], [1, '-', 'doc', 'Документы'], [2, '', 'doc', DOC_A, 1], [2, '', 'doc', DOC_B, 1], [1, '-', 'enum', 'Перечисления'], [2, '', 'enum', 'Товар', 0], [2, '', 'enum', 'ЮрФизЛицо', 0], [2, '', 'enum', 'Скидка', 0], [2, '', 'enum', 'Поставщики', 0], [2, '', 'enum', '', 0]],
        lower: [[1, '-', 'doc', 'Документы'], [2, '', 'doc', DOC_A], [2, '', 'doc', DOC_B], [1, '-', 'rep', 'Отчеты'], [2, '', 'rep', 'КоличествоТовара']] },
      { cls: 'wnd-goods', title: 'Подсистема Товары', upperH: 225, height: 509, foot: false, scroll: [0, 95],
        upper: [[1, '-', 'cat', 'Справочники'], [2, '', 'cat', 'Клиенты', 0], [2, '', 'cat', 'Сотрудники', 0], [2, '', 'cat', 'ТоварНаСклад', 1], [2, '', 'cat', 'ТоварВМагазине', 1], [1, '-', 'doc', 'Документы'], [2, '', 'doc', DOC_A, 0], [2, '', 'doc', DOC_B, 0], [1, '-', 'enum', 'Перечисления'], [2, '', 'enum', 'Товар', 1], [2, '', 'enum', 'ЮрФизЛицо', 1], [2, '', 'enum', 'Скидка', 0]],
        lower: [[1, '+', 'cat', 'Справочники'], [1, '+', 'enum', 'Перечисления'], [1, '+', 'rep', 'Отчеты'], [1, '+', 'regsv', 'Регистры сведений'], [1, '+', 'regnak', 'Регистры накопления']] },
      { cls: 'wnd-sale', title: 'Подсистема Скидки', upperH: 193, height: 479, foot: false, scroll: [0, 125],
        upper: [[1, '-', 'cat', 'Справочники'], [2, '', 'cat', 'Клиенты', 1], [2, '', 'cat', 'Сотрудники', 0], [2, '', 'cat', 'ТоварНаСклад', 0], [2, '', 'cat', 'ТоварВМагазине', 0], [1, '-', 'doc', 'Документы'], [2, '', 'doc', DOC_A, 0], [2, '', 'doc', DOC_B, 0], [1, '+', 'enum', 'Перечисления'], [1, '+', 'rep', 'Отчеты']],
        lower: [[1, '-', 'cat', 'Справочники', 'focus'], [2, '', 'cat', 'Клиенты']] }
    ];

    function windowHtml(w) {
      const tabs = ['Основные', 'Функциональные опции', 'Состав', 'Прочее'].map(function (t, i) {
        return '<a class="tab-link nav-link' + (i === 2 ? ' active' : '') + '" href="#">' + t + '</a>';
      }).join('');
      const btns = ['Действия', '&lt;Назад', 'Далее&gt;', 'Закрыть', 'Справка'].map(function (b, i) {
        if (i === 0) return '<button type="button" class="wnd-btn btn d-flex align-items-center justify-content-between ps-2"><span>' + b + '</span><i></i></button>';
        return '<button type="button" class="wnd-btn btn">' + b + '</button>';
      }).join('');
      return '<div class="wnd ' + w.cls + '" style="height:' + w.height + 'px">'
        + '<div class="wnd-head d-flex align-items-center">' + ic('i-sub') + '<span>' + w.title + '</span>'
        + '<div class="d-flex align-items-center ms-auto me-1">'
        + '<svg width="9" height="12"><rect y="9" width="9" height="2" fill="currentColor"/></svg>'
        + '<svg class="wnd-ctl" width="13" height="12"><rect x=".5" y=".5" width="12" height="11" fill="none" stroke="currentColor"/></svg>'
        + '<svg class="wnd-ctl" width="12" height="12"><path d="M1.500 1.500l9 9M10.500 1.500l-9 9" stroke="currentColor" stroke-width="2"/></svg>'
        + '</div></div>'
        + '<div class="wnd-body d-flex flex-column" style="height:' + (w.height - 24) + 'px">'
        + '<div class="d-flex flex-grow-1" style="min-height:0"><div class="tab-col nav flex-column d-flex">' + tabs + '</div>'
        + '<div class="wnd-panel d-flex flex-column flex-grow-1">'
        + '<div class="wnd-tree d-flex flex-shrink-0" style="height:' + w.upperH + 'px"><div class="tree-rows flex-grow-1">' + w.upper.map(treeRow).join('') + '</div><div class="vscroll d-flex flex-column">' + scrollBar(w.scroll) + '</div></div>'
        + '<div class="split-bar"></div>'
        + '<div class="inc-head d-flex align-items-center"><span>Входящие в подсистему объекты:</span>' + ic('a-gray', 'ms-auto') + '</div>'
        + '<div class="wnd-tree flex-grow-1"><div class="tree-rows">' + w.lower.map(treeRow).join('') + '</div></div>'
        + '</div></div>'
        + (w.foot ? '<div class="wnd-foot d-flex justify-content-end">' + btns + '</div>' : '')
        + '</div></div>';
    }
    document.getElementById('mdi').innerHTML = windows.map(windowHtml).join('');

    document.getElementById('taskbar').innerHTML = ['Персонал', 'Товары', 'Скидки', 'Документы'].map(function (t, i) {
      return '<div class="task-item d-flex align-items-center' + (i === 2 ? ' is-on' : '') + '">' + ic('i-sub') + '<span>Подсистема ' + t + '</span></div>';
    }).join('');
  </script>
</body>
</html>
